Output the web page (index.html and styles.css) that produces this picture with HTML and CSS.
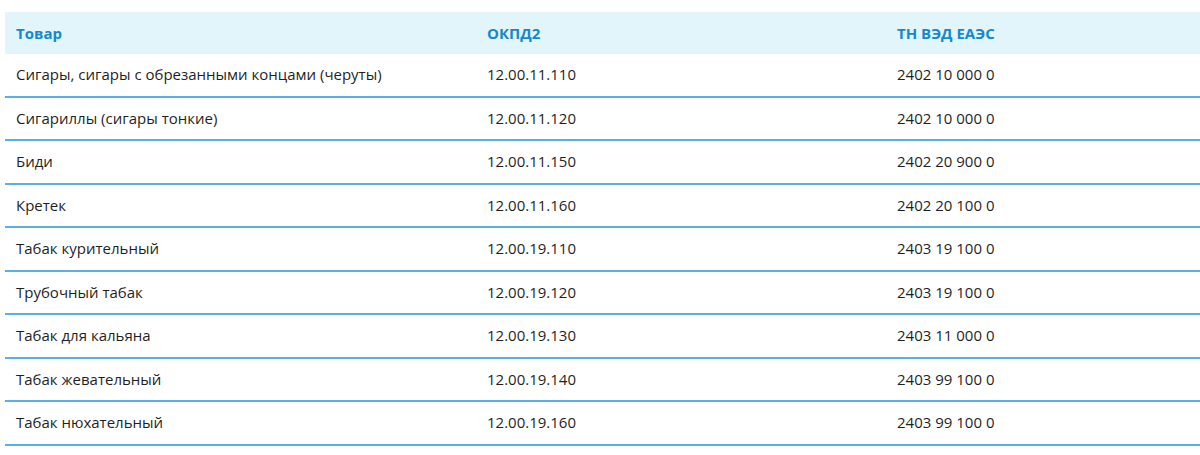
FILE: index.html
```html
<!DOCTYPE html>
<html lang="ru">
<head>
<meta charset="utf-8">
<link rel="stylesheet" href="styles.css">
</head>
<body>
<table class="codes">
  <colgroup>
    <col class="c1"><col class="c2"><col class="c3">
  </colgroup>
  <thead>
    <tr><th>Товар</th><th>ОКПД2</th><th>ТН ВЭД ЕАЭС</th></tr>
  </thead>
  <tbody>
    <tr><td>Сигары, сигары с обрезанными концами (черуты)</td><td>12.00.11.110</td><td>2402 10 000 0</td></tr>
    <tr><td>Сигариллы (сигары тонкие)</td><td>12.00.11.120</td><td>2402 10 000 0</td></tr>
    <tr><td>Биди</td><td>12.00.11.150</td><td>2402 20 900 0</td></tr>
    <tr><td>Кретек</td><td>12.00.11.160</td><td>2402 20 100 0</td></tr>
    <tr><td>Табак курительный</td><td>12.00.19.110</td><td>2403 19 100 0</td></tr>
    <tr><td>Трубочный табак</td><td>12.00.19.120</td><td>2403 19 100 0</td></tr>
    <tr><td>Табак для кальяна</td><td>12.00.19.130</td><td>2403 11 000 0</td></tr>
    <tr><td>Табак жевательный</td><td>12.00.19.140</td><td>2403 99 100 0</td></tr>
    <tr><td>Табак нюхательный</td><td>12.00.19.160</td><td>2403 99 100 0</td></tr>
  </tbody>
</table>
</body>
</html>
```
FILE: styles.css
```css
html, body {
  margin: 0;
  padding: 0;
  background: #fff;
}
body {
  padding: 12px 0 0 5px;
  font-family: "Open Sans", "Noto Sans", sans-serif;
  color: #222;
}
.codes {
  width: 1195px;
  border-collapse: collapse;
  table-layout: fixed;
}
.c1 { width: 471px; }
.c2 { width: 410px; }
.c3 { width: 314px; }
.codes th {
  background: #e1f5fb;
  color: #1787cc;
  font-weight: 700;
  font-size: 15px;
  text-align: left;
  height: 42px;
  padding: 0 11px;
  box-sizing: border-box;
  line-height: 20px;
}
.codes td {
  font-size: 15px;
  line-height: 19.5px;
  padding: 11px 11px;
  border-bottom: 2px solid #5dafdf;
  color: #1f1f1f;
  white-space: nowrap;
}
```
